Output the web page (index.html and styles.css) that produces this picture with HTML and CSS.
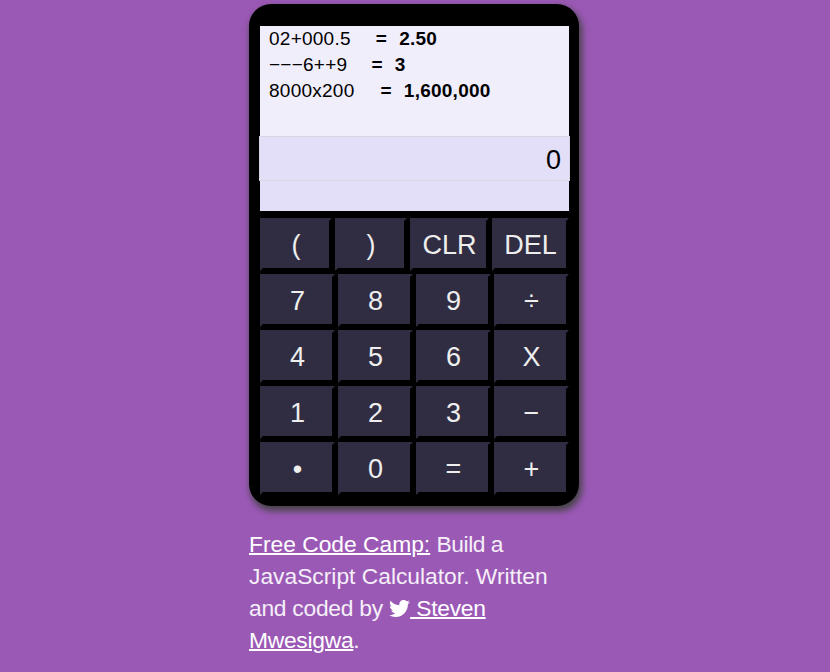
FILE: index.html
```html
<!DOCTYPE html>
<html lang="en">
<head>
<meta charset="utf-8">
<title>JavaScript Calculator</title>
<link rel="stylesheet" href="styles.css">
</head>
<body>
<main class="calculator">
  <section class="screen">
    <div class="history">
      <p><span>02+000.5</span><b class="eq">=</b><b>2.50</b></p>
      <p class="signs"><span>−−−6++9</span><b class="eq">=</b><b>3</b></p>
      <p class="digits"><span>8000x200</span><b class="eq">=</b><b>1,600,000</b></p>
    </div>
    <div class="entry">0</div>
  </section>
  <section class="keys">
    <div class="row functions"><button>(</button><button>)</button><button>CLR</button><button>DEL</button></div>
    <div class="row"><button>7</button><button>8</button><button>9</button><button>÷</button></div>
    <div class="row"><button>4</button><button>5</button><button>6</button><button>X</button></div>
    <div class="row"><button>1</button><button>2</button><button>3</button><button>−</button></div>
    <div class="row"><button>•</button><button>0</button><button>=</button><button>+</button></div>
  </section>
</main>
<footer class="credits"><a href="#">Free Code Camp:</a> <span class="tight">Build a</span> JavaScript Calculator. Written <span class="snug">and coded by</span> <a href="#"><svg class="bird" viewBox="0 0 512 512" aria-hidden="true"><path d="M459.37 151.716c.325 4.548.325 9.097.325 13.645 0 138.72-105.583 298.558-298.558 298.558-59.452 0-114.68-17.219-161.137-47.106 8.447.974 16.568 1.299 25.34 1.299 49.055 0 94.213-16.568 130.274-44.832-46.132-.975-84.792-31.188-98.112-72.772 6.498.974 12.995 1.624 19.818 1.624 9.421 0 18.843-1.3 27.614-3.573-48.081-9.747-84.143-51.98-84.143-102.985v-1.299c13.969 7.797 30.214 12.67 47.431 13.319-28.264-18.843-46.781-51.005-46.781-87.391 0-19.492 5.197-37.36 14.294-52.954 51.655 63.675 129.3 105.258 216.365 109.807-1.624-7.797-2.599-15.918-2.599-24.04 0-57.828 46.782-104.934 104.934-104.934 30.213 0 57.502 12.67 76.67 33.137 23.715-4.548 46.456-13.32 66.599-25.34-7.798 24.366-24.366 44.833-46.132 57.827 21.117-2.273 41.584-8.122 60.426-16.243-14.292 20.791-32.161 39.308-52.628 54.253z"/></svg><span class="snug"> Steven Mwesigwa</span></a>.</footer>
</body>
</html>
```
FILE: styles.css
```css
* { box-sizing: border-box; }

body {
  margin: 0;
  padding-top: 4px;
  min-height: 672px;
  overflow: hidden;
  background: #9b59b6;
  font-family: "Liberation Sans", Arial, sans-serif;
}

.calculator {
  width: 330px;
  height: 502px;
  margin: 0 0 0 249px;
  padding: 22px 10px 11px 11px;
  border-radius: 22px;
  background: #000;
  box-shadow: 2px 4px 7px 1px #444;
}

.screen {
  width: 309px;
  height: 185px;
  background: #e4dff8;
}

.history {
  height: 110px;
  padding-left: 9px;
  background: #f1eefb;
  font-size: 19px;
  letter-spacing: .25px;
  color: #000;
}

.history p {
  display: flex;
  margin: 0;
  line-height: 26px;
}

.eq { margin: 0 12px 0 25px; }

.signs .eq { margin-left: 24px; }

.digits .eq { margin-left: 26px; }

.entry {
  height: 45px;
  margin: 0 -1px;
  padding: 1px 8px 0 0;
  border: 1px solid #d8d5e2;
  background: #e4dff8;
  font-size: 27px;
  line-height: 45px;
  text-align: right;
  background-clip: padding-box;
}

.keys {
  display: grid;
  gap: 3px;
  margin-top: 7px;
  width: 309px;
}

.row {
  display: grid;
  grid-template-columns: repeat(4, 75px);
  gap: 3px;
}

.functions { grid-template-columns: 72px 72px 79px 77px; }

button {
  height: 53px;
  margin: 0;
  padding: 2px 0 0;
  border: 3px solid #302d42;
  border-right-color: #000;
  border-bottom-color: #000;
  background: #302d42;
  color: #eee;
  font: 27px/1 "Liberation Sans", Arial, sans-serif;
}

.credits {
  width: 332px;
  margin: 0 0 0 249px;
  padding: 22px 0 0;
  color: #f5eff8;
  font-size: 22.8px;
  line-height: 32px;
}

.credits a {
  color: #fff;
  text-decoration-thickness: 2px;
}

.tight { letter-spacing: -.45px; }

.snug { letter-spacing: -.26px; }

.bird {
  display: inline-block;
  width: 21px;
  height: 21px;
  fill: #fff;
  vertical-align: -3px;
}
```
